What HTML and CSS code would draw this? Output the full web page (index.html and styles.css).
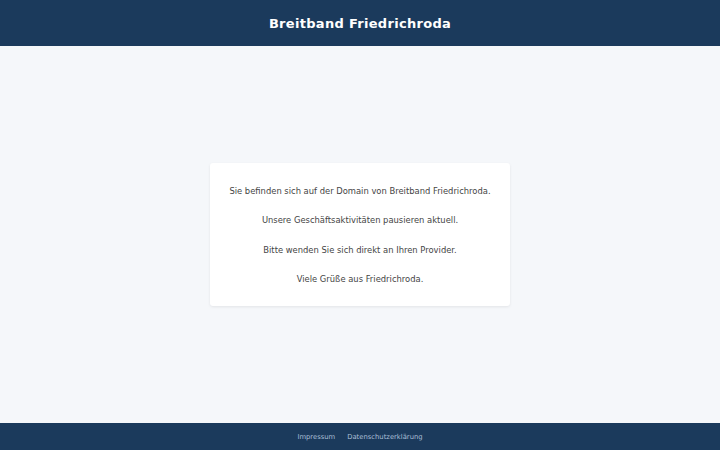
FILE: index.html
```html
<!DOCTYPE html>
<html lang="de">
<head>
<meta charset="utf-8">
<title>Breitband Friedrichroda</title>
<link rel="stylesheet" href="styles.css">
</head>
<body>
<header class="site-header">
  <h1 class="site-title">Breitband Friedrichroda</h1>
</header>
<main class="main">
  <div class="card">
    <p>Sie befinden sich auf der Domain von Breitband Friedrichroda.</p>
    <p>Unsere Geschäftsaktivitäten pausieren aktuell.</p>
    <p>Bitte wenden Sie sich direkt an Ihren Provider.</p>
    <p>Viele Grüße aus Friedrichroda.</p>
  </div>
</main>
<footer class="site-footer">
  <a href="#">Impressum</a>
  <a href="#">Datenschutzerklärung</a>
</footer>
</body>
</html>
```
FILE: styles.css
```css
html, body {
  margin: 0;
  padding: 0;
  height: 100%;
}
body {
  display: flex;
  flex-direction: column;
  font-family: "DejaVu Sans", sans-serif;
  background: #f5f7fa;
  color: #444;
}
.site-header {
  background: #1b3a5c;
  height: 46px;
  display: flex;
  align-items: center;
  justify-content: center;
  flex-shrink: 0;
}
.site-title {
  margin: 0;
  color: #fff;
  font-size: 13px;
  font-weight: bold;
  letter-spacing: 0.3px;
}
.main {
  flex: 1;
  display: flex;
  align-items: center;
  justify-content: center;
}
.card {
  background: #fff;
  width: 300px;
  box-sizing: border-box;
  padding: 22px 10px 21px;
  border-radius: 3px;
  box-shadow: 0 1px 3px rgba(0,0,0,0.08);
  text-align: center;
  font-size: 8.4px;
  line-height: 12px;
}
.card p {
  margin: 0;
}
.card p + p {
  margin-top: 17.5px;
}
.site-footer {
  background: #1b3a5c;
  height: 27px;
  display: flex;
  align-items: center;
  justify-content: center;
  gap: 12px;
  flex-shrink: 0;
}
.site-footer a {
  color: #a9bed6;
  text-decoration: none;
  font-size: 6.8px;
}
```
